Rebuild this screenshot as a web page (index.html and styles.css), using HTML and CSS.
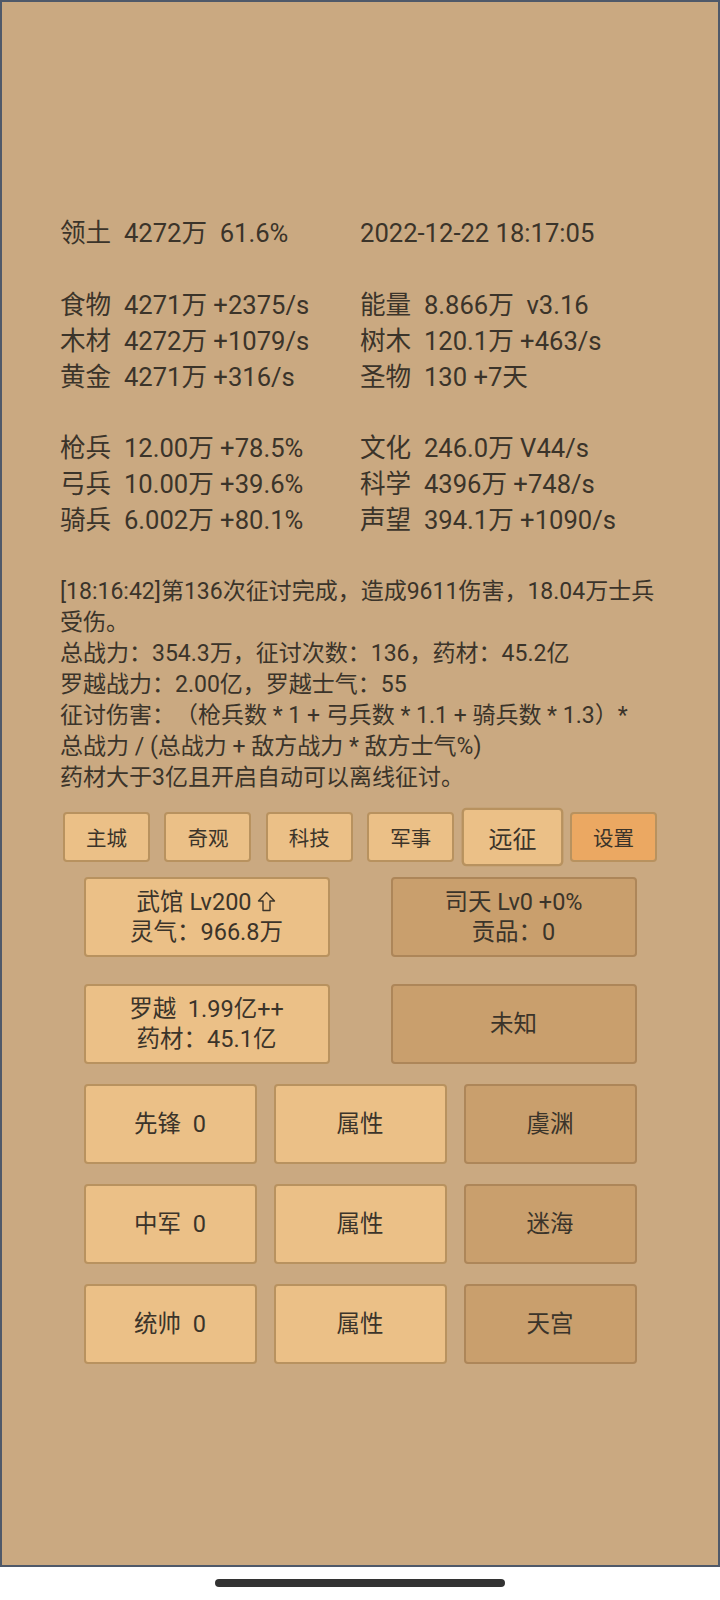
FILE: index.html
```html
<!DOCTYPE html>
<html lang="zh-CN">
<head>
    <meta charset="UTF-8">
    <meta name="viewport" content="width=device-width, initial-scale=1.0">
    <title>远征</title>
    <link rel="stylesheet" href="styles.css">
</head>
<body>

    <div class="screen">
        <div class="stats">
            <div>领土&nbsp;&nbsp;4272万&nbsp;&nbsp;61.6%</div>
            <div>2022-12-22 18:17:05</div>
            <div class="blank"></div>
            <div class="blank"></div>
            <div>食物&nbsp;&nbsp;4271万 +2375/s</div>
            <div>能量&nbsp;&nbsp;8.866万&nbsp;&nbsp;v3.16</div>
            <div>木材&nbsp;&nbsp;4272万 +1079/s</div>
            <div>树木&nbsp;&nbsp;120.1万 +463/s</div>
            <div>黄金&nbsp;&nbsp;4271万 +316/s</div>
            <div>圣物&nbsp;&nbsp;130 +7天</div>
            <div class="blank"></div>
            <div class="blank"></div>
            <div>枪兵&nbsp;&nbsp;12.00万 +78.5%</div>
            <div>文化&nbsp;&nbsp;246.0万 V44/s</div>
            <div>弓兵&nbsp;&nbsp;10.00万 +39.6%</div>
            <div>科学&nbsp;&nbsp;4396万 +748/s</div>
            <div>骑兵&nbsp;&nbsp;6.002万 +80.1%</div>
            <div>声望&nbsp;&nbsp;394.1万 +1090/s</div>
        </div>

        <div class="log">
            <p>[18:16:42]第136次征讨完成，造成9611伤害，18.04万士兵受伤。</p>
            <p>总战力：354.3万，征讨次数：136，药材：45.2亿</p>
            <p>罗越战力：2.00亿，罗越士气：55</p>
            <p>征讨伤害：（枪兵数 * 1 + 弓兵数 * 1.1 + 骑兵数 * 1.3）*<br>总战力 / (总战力 + 敌方战力 * 敌方士气%)</p>
            <p>药材大于3亿且开启自动可以离线征讨。</p>
        </div>

        <div class="tabs">
            <div class="tab">主城</div>
            <div class="tab">奇观</div>
            <div class="tab">科技</div>
            <div class="tab">军事</div>
            <div class="tab active">远征</div>
            <div class="tab setting">设置</div>
        </div>

        <div class="panel">
            <div class="row two">
                <div class="card">
                    <div>武馆 Lv200 <svg class="up" width="19" height="21" viewBox="0 0 19 21"><path d="M9.5 1.5 L17.5 10 L13 10 L13 19.5 L6 19.5 L6 10 L1.5 10 Z" fill="none" stroke="#3b342a" stroke-width="1.4" stroke-linejoin="round"/></svg><br>灵气：966.8万</div>
                </div>
                <div class="card dark"><div>司天 Lv0 +0%<br>贡品：0</div></div>
            </div>
            <div class="row two">
                <div class="card"><div>罗越&nbsp;&nbsp;1.99亿++<br>药材：45.1亿</div></div>
                <div class="card dark"><div>未知</div></div>
            </div>
            <div class="row three">
                <div class="card"><div>先锋&nbsp;&nbsp;0</div></div>
                <div class="card"><div>属性</div></div>
                <div class="card dark"><div>虞渊</div></div>
            </div>
            <div class="row three">
                <div class="card"><div>中军&nbsp;&nbsp;0</div></div>
                <div class="card"><div>属性</div></div>
                <div class="card dark"><div>迷海</div></div>
            </div>
            <div class="row three">
                <div class="card"><div>统帅&nbsp;&nbsp;0</div></div>
                <div class="card"><div>属性</div></div>
                <div class="card dark"><div>天宫</div></div>
            </div>
        </div>
    </div>

    <div class="home-bar"></div>

</body>
</html>
```

FILE: styles.css
```css
body {
    margin: 0;
    background-color: #fff;
    font-family: Roboto, "Noto Sans CJK SC", sans-serif;
    color: #3b342a;
    text-spacing-trim: space-all;
}
.screen {
    box-sizing: border-box;
    height: 1567px;
    background-color: #caa981;
    border: 2px solid #4f5969;
    padding-top: 214px;
}
.stats {
    display: grid;
    grid-template-columns: 300px 300px;
    padding-left: 58px;
    font-size: 25.6px;
    line-height: 35.9px;
}
.blank {
    height: 35.9px;
}
.log {
    width: 602px;
    margin: 37px 0 0 58px;
    font-size: 23px;
    line-height: 31px;
}
.log p {
    margin: 0;
}
.tabs {
    display: flex;
    justify-content: center;
    gap: 14.4px;
    margin-top: 19px;
}
.tab {
    box-sizing: border-box;
    width: 87px;
    height: 50px;
    display: flex;
    align-items: center;
    justify-content: center;
    font-size: 20.5px;
    background-color: #ebc087;
    border: 2px solid #b8925f;
    border-radius: 4px;
}
.tab.active {
    transform: scale(1.17);
}
.tab.setting {
    background-color: #eba862;
}
.panel {
    width: 553px;
    margin: 15px auto 0;
}
.row {
    display: grid;
    margin-bottom: 20px;
}
.row.two {
    grid-template-columns: 246px 246px;
    column-gap: 61px;
}
.row.two:first-child {
    margin-bottom: 27px;
}
.row.three {
    grid-template-columns: 1fr 1fr 1fr;
    column-gap: 17px;
}
.card {
    box-sizing: border-box;
    height: 80px;
    display: flex;
    align-items: center;
    justify-content: center;
    text-align: center;
    font-size: 23.5px;
    line-height: 30px;
    background-color: #ebc087;
    border: 2px solid #b8925f;
    border-radius: 4px;
}
.card.dark {
    background-color: #c99f6d;
    border-color: #ad8659;
}
.up {
    vertical-align: -2px;
}
.home-bar {
    width: 290px;
    height: 8px;
    margin: 12px auto 0;
    background-color: #333;
    border-radius: 4px;
}
```
